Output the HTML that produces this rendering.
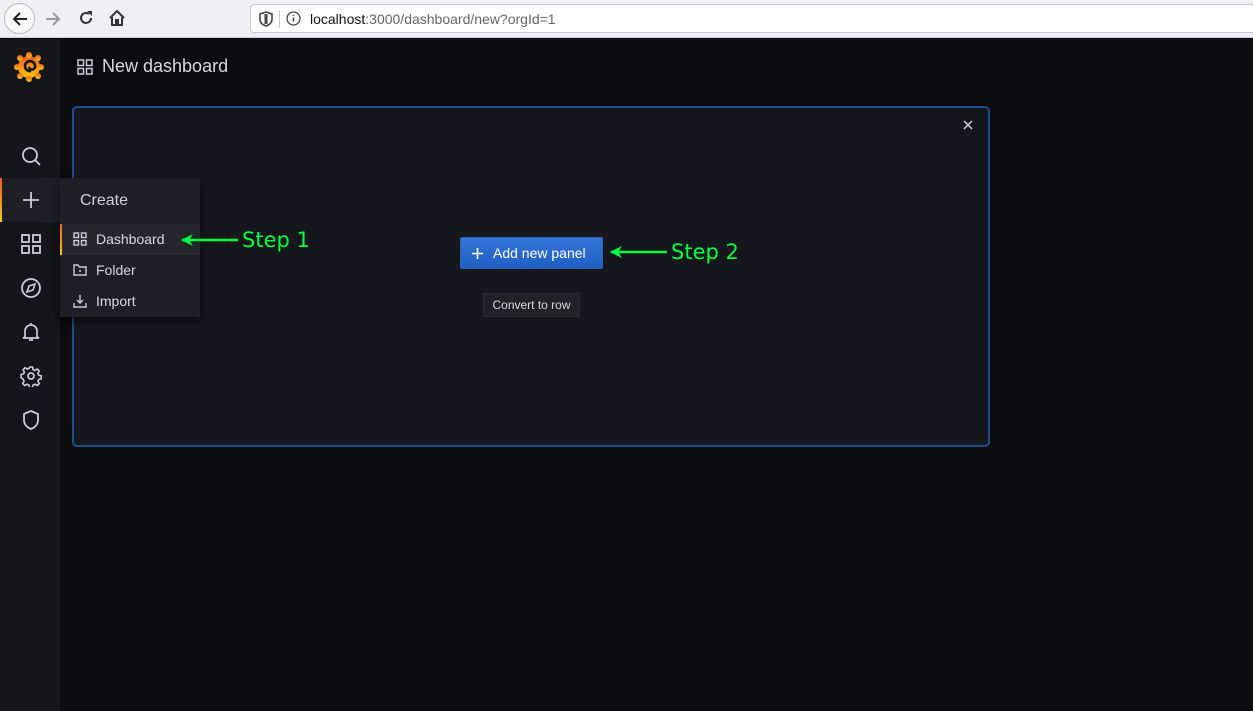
<!DOCTYPE html>
<html><head><meta charset="utf-8"><style>
*{box-sizing:border-box;margin:0;padding:0}
body{width:1253px;height:711px;overflow:hidden;background:#0b0c0e;font-family:"Liberation Sans",sans-serif;position:relative}
.bar{position:absolute;left:0;top:0;width:1253px;height:38px;background:#f0f0f4;border-bottom:1px solid #cfcfd8}
.url{position:absolute;left:250px;top:4px;width:1010px;height:29px;background:#fff;border:1px solid #c8c8d0;border-radius:4px}
.side{position:absolute;left:0;top:39px;width:60px;height:672px;background:#141619}
.ic{position:absolute;left:20px;width:22px;height:22px}
svg{display:block}
.panel{position:absolute;left:72px;top:106px;width:918px;height:341px;border:2px solid #1f4c8e;border-radius:5px;background:#16171c}
.menu{position:absolute;left:60px;top:178px;width:140px;height:139px;background:#1d1f24;box-shadow:0 4px 10px rgba(0,0,0,.6)}
.mi{position:absolute;left:0;width:140px;height:31px;color:#d8d9da;font-size:14px;line-height:31px;padding-left:36px}
.g{color:#00ff41;font-family:"DejaVu Sans",sans-serif;font-size:21px;position:absolute}
</style></head><body>
<div class="bar">
 <div style="position:absolute;left:4px;top:3px;width:31px;height:31px;border-radius:50%;border:1px solid #bbb;background:#fafafa"></div>
 <svg style="position:absolute;left:11px;top:10px" width="18" height="18" viewBox="0 0 18 18"><path d="M16 9H3M9 3L3 9l6 6" stroke="#222" stroke-width="2" fill="none"/></svg>
 <svg style="position:absolute;left:44px;top:10px" width="18" height="18" viewBox="0 0 18 18"><path d="M2 9h13M9 3l6 6-6 6" stroke="#999" stroke-width="2" fill="none"/></svg>
 <svg style="position:absolute;left:77px;top:9px" width="18" height="18" viewBox="0 0 18 18"><path d="M14 9a5 5 0 1 1-2-4" stroke="#333" stroke-width="2" fill="none"/><path d="M10 2h5v5z" fill="#333"/></svg>
 <svg style="position:absolute;left:108px;top:9px" width="18" height="18" viewBox="0 0 18 18"><path d="M2 9L9 2l7 7M4 8v8h4v-5h2v5h4V8" stroke="#333" stroke-width="2" fill="none"/></svg>
 <div class="url">
  <svg style="position:absolute;left:8px;top:6px" width="14" height="16" viewBox="0 0 14 16"><path d="M7 1L1 3v5c0 4 3 6 6 7 3-1 6-3 6-7V3z" stroke="#444" stroke-width="1.6" fill="none"/><path d="M7 3v10" stroke="#444" stroke-width="3"/></svg>
  <div style="position:absolute;left:28px;top:5px;width:1px;height:18px;background:#ccc"></div>
  <svg style="position:absolute;left:35px;top:6px" width="15" height="15" viewBox="0 0 15 15"><circle cx="7.5" cy="7.5" r="6.5" stroke="#444" fill="none" stroke-width="1.3"/><path d="M7.5 6.5v4M7.5 4v1" stroke="#444" stroke-width="1.5"/></svg>
  <div style="position:absolute;left:59px;top:6px;font-size:14px;color:#111">localhost<span style="color:#666">:3000/dashboard/new?orgId=1</span></div>
 </div>
</div>
<div class="side">
 <svg style="position:absolute;left:12px;top:10px" width="34" height="34" viewBox="0 0 34 34"><defs><linearGradient id="gr" x1="0" y1="1" x2="0" y2="0"><stop offset="0" stop-color="#fbca0a"/><stop offset="1" stop-color="#f05a28"/></linearGradient></defs>
 <g fill="url(#gr)"><circle cx="17" cy="18" r="11"/><circle cx="17" cy="6" r="3"/><circle cx="26" cy="9" r="3"/><circle cx="29" cy="18" r="3"/><circle cx="26" cy="27" r="3"/><circle cx="17" cy="30" r="3"/><circle cx="8" cy="27" r="3"/><circle cx="5" cy="18" r="3"/><circle cx="8" cy="9" r="3"/></g>
 <path d="M19 22a5 5 0 1 1 4-5a3 3 0 1 1-6 1" stroke="#141619" stroke-width="2.6" fill="none"/></svg>
 <svg class="ic" style="top:106px" viewBox="0 0 22 22"><circle cx="10" cy="10" r="7" stroke="#ccccdc" stroke-width="1.8" fill="none"/><path d="M15 15l5 5" stroke="#ccccdc" stroke-width="1.8"/></svg>
 <div style="position:absolute;left:0;top:139px;width:60px;height:44px;background:#1d1f24"></div>
 <div style="position:absolute;left:0;top:139px;width:2px;height:44px;background:linear-gradient(#f05a28,#fbca0a)"></div>
 <svg class="ic" style="top:150px" viewBox="0 0 22 22"><path d="M11 3v16M3 11h16" stroke="#ccccdc" stroke-width="1.8"/></svg>
 <svg class="ic" style="top:194px" viewBox="0 0 22 22"><g stroke="#ccccdc" stroke-width="1.8" fill="none"><rect x="2" y="2" width="7" height="7"/><rect x="13" y="2" width="7" height="7"/><rect x="2" y="13" width="7" height="7"/><rect x="13" y="13" width="7" height="7"/></g></svg>
 <svg class="ic" style="top:238px" viewBox="0 0 22 22"><circle cx="11" cy="11" r="9" stroke="#ccccdc" stroke-width="1.8" fill="none"/><path d="M15 7l-2 6-6 2 2-6z" stroke="#ccccdc" stroke-width="1.6" fill="none"/></svg>
 <svg class="ic" style="top:282px" viewBox="0 0 22 22"><path d="M5 16V10a6 6 0 0 1 12 0v6l2 1H3z" stroke="#ccccdc" stroke-width="1.7" fill="none"/><path d="M9 19h4M11 2v2" stroke="#ccccdc" stroke-width="1.7"/></svg>
 <svg class="ic" style="top:326px" viewBox="0 0 22 22"><path d="M9.5 2h3l.6 2.6 1.8.8 2.3-1.4 2.1 2.1-1.4 2.3.8 1.8 2.6.6v3l-2.6.6-.8 1.8 1.4 2.3-2.1 2.1-2.3-1.4-1.8.8-.6 2.6h-3l-.6-2.6-1.8-.8-2.3 1.4-2.1-2.1 1.4-2.3-.8-1.8L1 12.5v-3l2.6-.6.8-1.8L3 4.8 5.1 2.7l2.3 1.4 1.8-.8z" stroke="#ccccdc" stroke-width="1.6" fill="none" stroke-linejoin="round"/><circle cx="11" cy="11" r="3" stroke="#ccccdc" stroke-width="1.7" fill="none"/></svg>
 <svg class="ic" style="top:370px" viewBox="0 0 22 22"><path d="M11 2L4 5v6c0 5 4 8 7 9 3-1 7-4 7-9V5z" stroke="#ccccdc" stroke-width="1.8" fill="none"/></svg>
</div>
<svg style="position:absolute;left:77px;top:59px" width="16" height="16" viewBox="0 0 16 16"><g stroke="#ccccdc" stroke-width="1.5" fill="none"><rect x="1" y="1" width="5.5" height="5.5"/><rect x="9.5" y="1" width="5.5" height="5.5"/><rect x="1" y="9.5" width="5.5" height="5.5"/><rect x="9.5" y="9.5" width="5.5" height="5.5"/></g></svg>
<div style="position:absolute;left:102px;top:56px;font-size:18px;color:#d8d9da">New dashboard</div>
<div class="panel">
 <svg style="position:absolute;left:889px;top:12px" width="10" height="10" viewBox="0 0 10 10"><path d="M1 1l8 8M9 1L1 9" stroke="#ccccdc" stroke-width="1.5"/></svg>
 <div style="position:absolute;left:386px;top:129px;width:143px;height:32px;border:1px solid #2d5fb3;border-radius:2px;background:linear-gradient(#3274d9,#1f60c4)"></div>
 <svg style="position:absolute;left:398px;top:140px" width="11" height="11" viewBox="0 0 11 11"><path d="M5.5 0v11M0 5.5h11" stroke="#fff" stroke-width="1.6"/></svg>
 <div style="position:absolute;left:419px;top:137px;font-size:14px;color:#fff;font-weight:500">Add new panel</div>
 <div style="position:absolute;left:409px;top:185px;width:97px;height:24px;background:#202226;border:1px solid #2c2e33;border-radius:2px;font-size:12px;color:#d8d9da;text-align:center;line-height:22px">Convert to row</div>
</div>
<div class="menu">
 <div style="position:absolute;left:20px;top:14px;font-size:16px;color:#d0d1d3">Create</div>
 <div class="mi" style="top:46px;background:#25272c;border-left:2px solid;border-image:linear-gradient(#f05a28,#fbca0a) 1"></div>
 <div class="mi" style="top:46px">Dashboard</div>
 <svg style="position:absolute;left:13px;top:54px" width="14" height="14" viewBox="0 0 14 14"><g stroke="#ccccdc" stroke-width="1.4" fill="none"><rect x="1" y="1" width="4.5" height="4.5"/><rect x="8.5" y="1" width="4.5" height="4.5"/><rect x="1" y="8.5" width="4.5" height="4.5"/><rect x="8.5" y="8.5" width="4.5" height="4.5"/></g></svg>
 <div class="mi" style="top:77px">Folder</div>
 <svg style="position:absolute;left:13px;top:85px" width="14" height="14" viewBox="0 0 14 14"><path d="M1 2h4l1.5 2H13v8H1z" stroke="#ccccdc" stroke-width="1.4" fill="none"/><circle cx="7" cy="8" r="1" fill="#ccccdc"/></svg>
 <div class="mi" style="top:108px">Import</div>
 <svg style="position:absolute;left:13px;top:116px" width="14" height="14" viewBox="0 0 14 14"><path d="M7 1v8M4 6l3 3 3-3M1 9v4h12V9" stroke="#ccccdc" stroke-width="1.4" fill="none"/></svg>
</div>
<svg style="position:absolute;left:180px;top:233px" width="60" height="14" viewBox="0 0 60 14"><path d="M2 7h56" stroke="#00ff41" stroke-width="2.5"/><path d="M1 7l12-6-4 6 4 6z" fill="#00ff41"/></svg>
<div class="g" style="left:242px;top:228px">Step 1</div>
<svg style="position:absolute;left:609px;top:245px" width="60" height="14" viewBox="0 0 60 14"><path d="M2 7h56" stroke="#00ff41" stroke-width="2.5"/><path d="M1 7l12-6-4 6 4 6z" fill="#00ff41"/></svg>
<div class="g" style="left:671px;top:240px">Step 2</div>
</body></html>
